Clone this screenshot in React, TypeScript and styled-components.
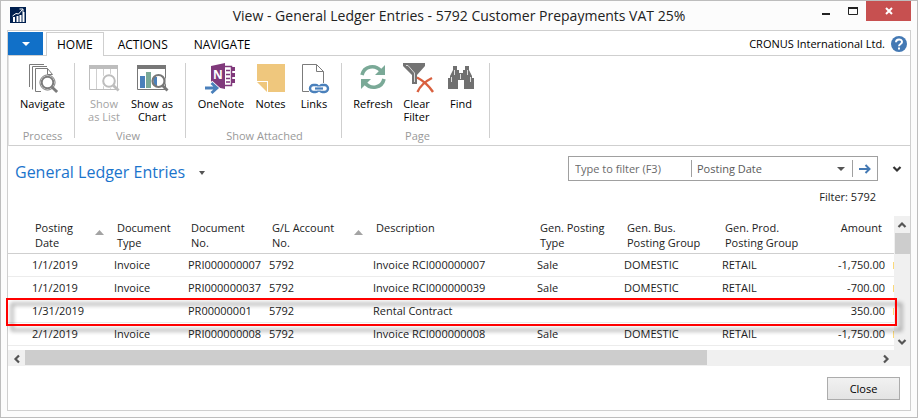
import React from "react";
import styled, { createGlobalStyle } from "styled-components";

const GlobalStyle = createGlobalStyle`
  *, *::before, *::after { box-sizing: border-box; }
  body {
    margin: 0;
    background: #fcfcfc;
    color: #222;
    font-family: "Open Sans", "Noto Sans", sans-serif;
    font-size: 12px;
  }
  button, input, select { font: inherit; color: inherit; margin: 0; }
`;

/* ---------- Window frame ---------- */

const Window = styled.div`
  display: flex;
  flex-direction: column;
  min-height: 100vh;
  padding: 0 6px 6px;
  border: 1px solid #bdbdbd;
  background: #fcfcfc;
`;

const TitleBar = styled.header`
  display: grid;
  grid-template-columns: 102px 1fr 102px;
  height: 29px;
`;

const AppLogo = styled.svg`
  display: block;
  margin: 6px 0 0 3px;
`;

const Title = styled.h1`
  margin: 0;
  font-size: 14px;
  font-weight: 400;
  line-height: 30px;
  text-align: center;
  white-space: nowrap;
`;

const Caption = styled.div`
  display: flex;
  justify-content: flex-end;
  align-items: flex-start;
`;

const CaptionButton = styled.button<{ $danger?: boolean }>`
  display: flex;
  align-items: center;
  justify-content: center;
  width: ${(p) => (p.$danger ? 45 : 27)}px;
  height: 20px;
  padding: 0;
  border: 0;
  background: ${(p) => (p.$danger ? "#c75050" : "transparent")};
`;

const Panel = styled.div`
  display: flex;
  flex: 1;
  flex-direction: column;
  border: 1px solid #cfcfcf;
  background: #fff;
`;

/* ---------- Tabs and ribbon ---------- */

const TabStrip = styled.nav`
  display: flex;
  align-items: stretch;
  height: 25px;
  padding-top: 1px;
  border-bottom: 1px solid #cfcfcf;
  color: #000;
`;

const FileMenu = styled.button`
  display: flex;
  align-items: center;
  justify-content: center;
  width: 35px;
  height: 23px;
  margin-right: 3px;
  padding: 0;
  border: 0;
  background: #1170c8;
`;

const Tab = styled.button<{ $active?: boolean }>`
  height: 24px;
  margin-right: 2px;
  padding: 0 ${(p) => (p.$active ? 10 : 11)}px;
  border: 1px solid ${(p) => (p.$active ? "#cfcfcf" : "transparent")};
  border-bottom: 0;
  background: ${(p) => (p.$active ? "#fff" : "transparent")};
  line-height: 24px;
`;

const Company = styled.div`
  display: flex;
  align-items: center;
  gap: 6px;
  margin-left: auto;
  padding-right: 3px;
  font-size: 11px;
`;

const HelpButton = styled.button`
  display: block;
  width: 16px;
  height: 16px;
  padding: 0;
  border: 0;
  background: none;
`;

const Ribbon = styled.div`
  display: flex;
  padding: 7px 0;
  height: 90px;
  border-bottom: 1px solid #cfcfcf;
  border-left: 1px solid #e3e3e3;
`;

const Group = styled.section<{ $left: number; $right: number }>`
  display: flex;
  flex-direction: column;
  justify-content: space-between;
  padding: 0 ${(p) => p.$right}px 0 ${(p) => p.$left}px;
  border-right: 1px solid #cfcfcf;
`;

const Commands = styled.div`
  display: flex;
`;

const GroupName = styled.div`
  margin-bottom: -5px;
  color: #999;
  font-size: 11px;
  line-height: 14px;
  text-align: center;
  white-space: nowrap;
`;

const Command = styled.button<{ $width: number }>`
  display: flex;
  flex-direction: column;
  align-items: center;
  width: ${(p) => p.$width}px;
  height: 60px;
  padding: 0;
  border: 0;
  background: none;
  color: #000;
  font-size: 11px;
  line-height: 13px;
  white-space: pre-line;
  &:disabled { color: #a3a3a3; }
  svg { display: block; flex: none; margin-bottom: 4px; overflow: visible; }
`;

/* ---------- Page heading and filter ---------- */

const PageHead = styled.div`
  display: flex;
  justify-content: space-between;
  align-items: flex-start;
  height: 70px;
  padding: 10px 8px 0 7px;
`;

const PageTitle = styled.h2`
  display: flex;
  align-items: center;
  gap: 14px;
  margin: 4px 0 0;
  color: #1a74cc;
  font-size: 16px;
  font-weight: 400;
  line-height: 24px;
`;

const MenuButton = styled.button`
  padding: 0;
  border: 0;
  background: none;
  line-height: 0;
`;

const FilterArea = styled.div`
  display: grid;
  grid-template-columns: 310px auto;
  column-gap: 14px;
  align-items: center;
`;

const FilterBox = styled.form`
  display: flex;
  align-items: center;
  height: 25px;
  border: 1px solid #a0a0a0;
  color: #5a5a5a;
`;

const FilterInput = styled.input`
  flex: 1;
  min-width: 0;
  height: 21px;
  padding: 0 6px;
  border: 0;
  background: transparent;
  font-size: 11px;
  &::placeholder { color: #6a6a6a; opacity: 1; }
`;

const SelectWrap = styled.label`
  display: flex;
  align-items: center;
  width: 162px;
  height: 17px;
  padding-right: 7px;
  border-left: 1px solid #a0a0a0;
  border-right: 1px solid #a0a0a0;
`;

const FilterSelect = styled.select`
  flex: 1;
  appearance: none;
  padding: 0 5px;
  border: 0;
  background: transparent;
  font-size: 11px;
`;

const GoButton = styled.button`
  display: flex;
  align-items: center;
  justify-content: center;
  width: 24px;
  padding: 0;
  border: 0;
  background: none;
`;

const FilterSummary = styled.div`
  padding: 8px 2px 0;
  font-size: 11px;
  line-height: 16px;
  text-align: right;
`;

/* ---------- Ledger list ---------- */

const ListArea = styled.div`
  display: grid;
  grid-template-columns: 1fr 16px;
  grid-template-rows: auto 16px;
`;

const TableClip = styled.div`
  min-width: 0;
  padding-bottom: 4px;
`;

const Table = styled.table`
  width: 100%;
  table-layout: fixed;
  border-collapse: separate;
  border-spacing: 0;
  font-size: 11px;
`;

const Th = styled.th<{ $right?: boolean }>`
  height: 38px;
  padding: 4px 6px 3px;
  border-bottom: 1px solid #cfcfcf;
  font-weight: 400;
  line-height: 15px;
  text-align: ${(p) => (p.$right ? "right" : "left")};
  vertical-align: top;
  white-space: nowrap;
`;

const HeadLabel = styled.div`
  display: flex;
  align-items: center;
  justify-content: space-between;
`;

const SortIcon = styled.svg`
  margin: 0 1px 5px 0;
`;

const Row = styled.tr`
  position: relative;
`;

const Td = styled.td<{ $right?: boolean }>`
  height: 23px;
  padding: 0 3px;
  border-bottom: 1px solid #ececec;
  line-height: 22px;
  text-align: ${(p) => (p.$right ? "right" : "left")};
  white-space: nowrap;
`;

const NextColumn = styled.td`
  padding: 0;
  border-bottom: 1px solid #ececec;
  &::after {
    content: "";
    display: block;
    width: 1px;
    height: 7px;
    margin-left: auto;
    background: #fbd97a;
  }
`;

const Callout = styled.div`
  position: absolute;
  z-index: 2;
  inset: -2px -3px -3px -2px;
  border: 2px solid #f00;
  filter: drop-shadow(5px 5px 2px rgba(0, 0, 0, 0.45));
  pointer-events: none;
`;

const VScroll = styled.div`
  display: flex;
  flex-direction: column;
  align-items: center;
  background: #f0f0f0;
`;

const HScroll = styled.div`
  display: flex;
  grid-column: 1 / -1;
  padding-right: 16px;
  background: #f0f0f0;
`;

const ScrollButton = styled.button`
  display: flex;
  flex: none;
  align-items: center;
  justify-content: center;
  width: 17px;
  height: 17px;
  padding: 0;
  border: 0;
  background: none;
`;

const VThumb = styled.div`
  width: 15px;
  height: 21px;
  margin-bottom: auto;
  background: #cdcdcd;
`;

const HTrack = styled.div`
  flex: 1;
`;

const HThumb = styled.div`
  width: 80%;
  height: 15px;
  background: #cdcdcd;
`;

const Footer = styled.footer`
  display: flex;
  justify-content: flex-end;
  padding: 11px 10px 9px;
`;

const CloseButton = styled.button`
  width: 73px;
  height: 23px;
  padding: 0;
  border: 1px solid #acacac;
  background: linear-gradient(#f1f1f1, #e4e4e4);
  color: #000;
  font-size: 11px;
`;

/* ---------- Icons ---------- */

const Magnifier = ({ x, y, color }: { x: number; y: number; color: string }) => (
  <g>
    <circle cx={x} cy={y} r="7.6" fill="#fff" />
    <circle cx={x} cy={y} r="5.8" fill="#fff" stroke={color} strokeWidth="2" />
    <path d={`M${x + 4.4} ${y + 4.4}L${x + 9.6} ${y + 9.6}`} stroke={color} strokeWidth="2.8" />
  </g>
);

const NavigateIcon = () => (
  <svg width="30" height="30" viewBox="0 0 30 30" fill="none" stroke="#7b7b7b">
    <path d="M16 1.5H1.5V24M19 3.5H4.5V26.5" />
    <path d="M7.5 5.5H19.5L24.5 11.500V28.500H7.500Z" fill="#fff" stroke="none" />
    <path d="M13 28.500H7.500V5.500H19.500L24.500 11.500H19.500V5.500" />
    <Magnifier x={19.5} y={19.5} color="#7b7b7b" />
  </svg>
);

const ListIcon = () => (
  <svg width="30" height="30" viewBox="0 0 30 30">
    <path d="M.5 2.500H28.500V26.500H.5Z" fill="#fff" stroke="#bdbdbd" />
    <path d="M0 2H29V6H0Z" fill="#bdbdbd" />
    <path d="M7.500 6V26M14.500 6V26M21.500 6V26" stroke="#cfcfcf" />
    <Magnifier x={20} y={18} color="#bdbdbd" />
  </svg>
);

const ChartIcon = () => (
  <svg width="30" height="30" viewBox="0 0 30 30">
    <path d="M.5 2.500H28.500V26.500H.5Z" fill="#fff" stroke="#777" />
    <path d="M0 2H29V6H0Z" fill="#777" />
    <path d="M3 13H8V25H3Z" fill="#4a80bb" />
    <path d="M9 9H14V25H9Z" fill="#7aa997" />
    <circle cx="21.500" cy="18" r="7.500" fill="#fff" />
    <path d="M16 14H20V23H17Z" fill="#4a80bb" />
    <circle cx="21.500" cy="18" r="6" fill="none" stroke="#777" strokeWidth="2.200" />
    <path d="M25.500 22.500L30.500 27.500" stroke="#777" strokeWidth="2.800" />
  </svg>
);

const OneNoteIcon = () => (
  <svg width="32" height="30" viewBox="0 0 32 30">
    <path d="M6 3L20 0V26L6 23Z" fill="#80397b" />
    <path d="M20 3.500H26.500V22.500H20" fill="#fff" stroke="#80397b" strokeWidth="1.500" />
    <path d="M21 7.500H25M21 11.500H25M21 15.500H25M21 19H25" stroke="#80397b" strokeWidth="1.300" />
    <path d="M26 4H30V8H26ZM26 10H30V14H26ZM26 16H30V20H26Z" fill="#80397b" />
    <text x="8" y="16" fill="#fff" fontFamily="Open Sans" fontSize="12" fontWeight="700">N</text>
    <path d="M0 25H9M5.500 19.500L11.500 25L5.500 30.500" fill="none" stroke="#fff" strokeWidth="5" />
    <path d="M0 25H11M6.500 20L12 25L6.500 30" fill="none" stroke="#4a80bb" strokeWidth="2.800" />
  </svg>
);

const NotesIcon = () => (
  <svg width="28" height="30" viewBox="0 0 28 30">
    <path d="M0 1H28V29H11V18H0Z" fill="#efc77d" />
    <path d="M0 19H10V29Z" fill="#efc77d" />
  </svg>
);

const LinksIcon = () => (
  <svg width="24" height="30" viewBox="0 0 24 30" fill="none">
    <path d="M.5 1.500H14.500L21.500 8.500V28.500H.5Z" fill="#fff" stroke="#7b7b7b" />
    <path d="M14.500 1.500V8.500H21.500" stroke="#7b7b7b" />
    <path d="M7 20H27V30H7Z" fill="#fff" />
    <rect x="8" y="22" width="9" height="7" rx="3.500" stroke="#4a80bb" strokeWidth="2.400" />
    <rect x="17" y="22" width="9" height="7" rx="3.500" stroke="#4a80bb" strokeWidth="2.400" />
    <path d="M14 25.500H20" stroke="#fff" strokeWidth="4" />
    <path d="M13 25.500H21" stroke="#4a80bb" strokeWidth="2.200" />
  </svg>
);

const RefreshIcon = () => (
  <svg width="26" height="30" viewBox="0 0 26 30" fill="none" stroke="#7aa997" strokeWidth="3.6">
    <path d="M2 12C4 3 15 1 21 8" />
    <path d="M25 2V12H15Z" fill="#7aa997" stroke="none" />
    <path d="M24 16C22 25 11 27 5 20" />
    <path d="M1 26V16H11Z" fill="#7aa997" stroke="none" />
  </svg>
);

const ClearFilterIcon = () => (
  <svg width="27" height="30" viewBox="0 0 27 30">
    <path d="M0 0H22V3L14 12V21H9V12L0 3Z" fill="#737373" />
    <path d="M3 2.500H5L11.500 10V19" fill="none" stroke="#d8d8d8" />
    <path d="M14 14.500C19 17 26 23 30 29M29 15C23 18 17 23 14.500 29" fill="none" stroke="#d9603f" strokeWidth="2.400" />
  </svg>
);

const FindIcon = () => (
  <svg width="26" height="30" viewBox="0 0 26 30">
    <path d="M5 3H9V7H11V10H15V7H17V3H21V7L24 13V15H26V26H16V17H10V26H0V15H2V13L5 7Z" fill="#707070" />
    <path d="M6.500 7V12M3.500 14V19M19.500 7V12M22.500 14V19M12.500 11V16" stroke="#ddd" />
  </svg>
);

const Caret = ({ color = "#555", width = 7 }: { color?: string; width?: number }) => (
  <svg width={width} height="4" viewBox="0 0 8 4" preserveAspectRatio="none" aria-hidden="true">
    <path d="M0 0H8L4 4Z" fill={color} />
  </svg>
);

const SortMark = () => (
  <SortIcon width="9" height="5" viewBox="0 0 9 5" aria-label="Sorted ascending">
    <path d="M0 5H9L4.500 0Z" fill="#a3a3a3" />
  </SortIcon>
);

const turns = { up: 180, down: 0, left: 90, right: -90 };

const Chevron = ({ to, color = "#555" }: { to: keyof typeof turns; color?: string }) => (
  <svg width="10" height="10" viewBox="0 0 10 10" aria-hidden="true">
    <path
      d="M1.500 3L5 6.500L8.500 3"
      fill="none"
      stroke={color}
      strokeWidth="2.200"
      transform={`rotate(${turns[to]} 5 5)`}
    />
  </svg>
);

/* ---------- Data ---------- */

type CommandItem = { label: string; icon: React.ReactNode; width: number; disabled?: boolean };

const groups: { name: string; left: number; right: number; commands: CommandItem[] }[] = [
  { name: "Process", left: 9, right: 7, commands: [{ label: "Navigate", icon: <NavigateIcon />, width: 49 }] },
  {
    name: "View",
    left: 5,
    right: 9,
    commands: [
      { label: "Show\nas List", icon: <ListIcon />, width: 48, disabled: true },
      { label: "Show as\nChart", icon: <ChartIcon />, width: 48 },
    ],
  },
  {
    name: "Show Attached",
    left: 10,
    right: 8,
    commands: [
      { label: "OneNote", icon: <OneNoteIcon />, width: 50 },
      { label: "Notes", icon: <NotesIcon />, width: 49 },
      { label: "Links", icon: <LinksIcon />, width: 38 },
    ],
  },
  {
    name: "Page",
    left: 9,
    right: 5,
    commands: [
      { label: "Refresh", icon: <RefreshIcon />, width: 44 },
      { label: "Clear\nFilter", icon: <ClearFilterIcon />, width: 43 },
      { label: "Find", icon: <FindIcon />, width: 46 },
    ],
  },
];

const columns: { title: string[]; width?: number; sorted?: boolean; right?: boolean }[] = [
  { title: ["Posting", "Date"], width: 82, sorted: true },
  { title: ["Document", "Type"], width: 74 },
  { title: ["Document", "No."], width: 81 },
  { title: ["G/L Account", "No."], width: 104, sorted: true },
  { title: ["Description"] },
  { title: ["Gen. Posting", "Type"], width: 87 },
  { title: ["Gen. Bus.", "Posting Group"], width: 98 },
  { title: ["Gen. Prod.", "Posting Group"], width: 98 },
  { title: ["Amount"], width: 71, right: true },
];

const entries: { cells: string[]; marked?: boolean }[] = [
  { cells: ["1/1/2019", "Invoice", "PRI000000007", "5792", "Invoice RCI000000007", "Sale", "DOMESTIC", "RETAIL", "-1,750.00"] },
  { cells: ["1/1/2019", "Invoice", "PRI000000037", "5792", "Invoice RCI000000039", "Sale", "DOMESTIC", "RETAIL", "-700.00"] },
  { cells: ["1/31/2019", "", "PR00000001", "5792", "Rental Contract", "", "", "", "350.00"], marked: true },
  { cells: ["2/1/2019", "Invoice", "PRI000000008", "5792", "Invoice RCI000000008", "Sale", "DOMESTIC", "RETAIL", "-1,750.00"] },
];

/* ---------- Page ---------- */

export default function App() {
  return (
    <>
      <GlobalStyle />
      <Window>
        <TitleBar>
          <AppLogo width="16" height="16" viewBox="0 0 16 16" aria-hidden="true">
            <path d="M0 0H16V16H0Z" fill="#00204f" />
            <path d="M3 10H5V15H3ZM6.500 9H8.500V15H6.500ZM9.500 8H11.500V15H9.500ZM12.500 5H14.500V15H12.500Z" fill="#fff" />
            <path d="M2.500 9L6 6.500L8.500 7L12.500 2.500M9.500 2H13V5" fill="none" stroke="#fff" />
          </AppLogo>
          <Title>View - General Ledger Entries - 5792 Customer Prepayments VAT 25%</Title>
          <Caption>
            <CaptionButton aria-label="Minimize">
              <svg width="8" height="10"><path d="M0 7H8V9H0Z" fill="#222" /></svg>
            </CaptionButton>
            <CaptionButton aria-label="Maximize">
              <svg width="10" height="8"><path d="M.5 1H9.500V7.500H.5Z" fill="none" stroke="#222" /><path d="M0 0H10V2H0Z" fill="#222" /></svg>
            </CaptionButton>
            <CaptionButton $danger aria-label="Close window">
              <svg width="8" height="8"><path d="M1 1L7 7M7 1L1 7" stroke="#fff" strokeWidth="2" /></svg>
            </CaptionButton>
          </Caption>
        </TitleBar>

        <Panel>
          <TabStrip>
            <FileMenu aria-label="Application menu"><Caret color="#fff" width={8} /></FileMenu>
            <Tab $active>HOME</Tab>
            <Tab>ACTIONS</Tab>
            <Tab>NAVIGATE</Tab>
            <Company>
              <span>CRONUS International Ltd.</span>
              <HelpButton aria-label="Help">
                <svg width="16" height="16" viewBox="0 0 16 16">
                  <circle cx="8" cy="8" r="8" fill="#4479b4" />
                  <path d="M5 6.200C5 2.500 11 2.500 11 6C11 8.200 8 7.800 8 10.300" fill="none" stroke="#fff" strokeWidth="2" />
                  <path d="M7 11.500H9V13.500H7Z" fill="#fff" />
                </svg>
              </HelpButton>
            </Company>
          </TabStrip>

          <Ribbon>
            {groups.map((group) => (
              <Group key={group.name} $left={group.left} $right={group.right}>
                <Commands>
                  {group.commands.map((c) => (
                    <Command key={c.label} $width={c.width} disabled={c.disabled}>
                      {c.icon}
                      <span>{c.label}</span>
                    </Command>
                  ))}
                </Commands>
                <GroupName>{group.name}</GroupName>
              </Group>
            ))}
          </Ribbon>

          <PageHead>
            <PageTitle>
              General Ledger Entries
              <MenuButton aria-label="Page menu"><Caret width={6} /></MenuButton>
            </PageTitle>
            <FilterArea>
              <FilterBox onSubmit={(e) => e.preventDefault()}>
                <FilterInput aria-label="Filter text" placeholder="Type to filter (F3)" />
                <SelectWrap>
                  <FilterSelect aria-label="Filter field" defaultValue="Posting Date">
                    <option>Posting Date</option>
                    <option>Document Type</option>
                    <option>Description</option>
                  </FilterSelect>
                  <Caret width={8} />
                </SelectWrap>
                <GoButton aria-label="Apply filter">
                  <svg width="12" height="10" viewBox="0 0 12 10">
                    <path d="M0 5H11M6.500 1L10.500 5L6.500 9" fill="none" stroke="#4479b4" strokeWidth="2" />
                  </svg>
                </GoButton>
              </FilterBox>
              <MenuButton aria-label="Expand filter"><Chevron to="down" color="#333" /></MenuButton>
              <FilterSummary>Filter: 5792</FilterSummary>
            </FilterArea>
          </PageHead>

          <ListArea>
            <TableClip>
              <Table>
                <colgroup>
                  <col width="21" />
                  {columns.map((c, i) => <col key={i} width={c.width} />)}
                  <col width="6" />
                </colgroup>
                <thead>
                  <tr>
                    <Th />
                    {columns.map((c, i) => (
                      <Th key={i} $right={c.right} scope="col">
                        {c.sorted ? (
                          <HeadLabel>
                            <span>{c.title[0]}<br />{c.title[1]}</span>
                            <SortMark />
                          </HeadLabel>
                        ) : (
                          c.title.map((line) => <div key={line}>{line}</div>)
                        )}
                      </Th>
                    ))}
                    <Th />
                  </tr>
                </thead>
                <tbody>
                  {entries.map((entry, r) => (
                    <Row key={r}>
                      <Td>{entry.marked && <Callout />}</Td>
                      {entry.cells.map((cell, i) => (
                        <Td key={i} $right={columns[i].right}>{cell}</Td>
                      ))}
                      <NextColumn />
                    </Row>
                  ))}
                </tbody>
              </Table>
            </TableClip>
            <VScroll>
              <ScrollButton aria-label="Scroll up"><Chevron to="up" /></ScrollButton>
              <VThumb />
              <ScrollButton aria-label="Scroll down"><Chevron to="down" /></ScrollButton>
            </VScroll>
            <HScroll>
              <ScrollButton aria-label="Scroll left"><Chevron to="left" /></ScrollButton>
              <HTrack><HThumb /></HTrack>
              <ScrollButton aria-label="Scroll right"><Chevron to="right" /></ScrollButton>
            </HScroll>
          </ListArea>

          <Footer>
            <CloseButton>Close</CloseButton>
          </Footer>
        </Panel>
      </Window>
    </>
  );
}
